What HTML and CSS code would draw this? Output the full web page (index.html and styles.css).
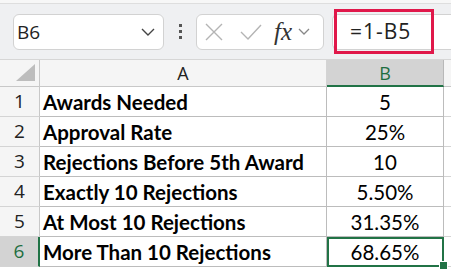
FILE: index.html
```html
<!DOCTYPE html>
<html lang="en">
<head>
    <meta charset="UTF-8">
    <title>Rejections</title>
    <link rel="stylesheet" href="styles.css">
</head>
<body>
    <div class="edge"></div>
    <div class="toolbar">
        <div class="name-box">
            <span>B6</span>
            <svg class="chev" width="14" height="8" viewBox="0 0 14 8"><path d="M1 1 L7 7 L13 1" fill="none" stroke="#444" stroke-width="1.4"/></svg>
        </div>
        <div class="dots"><i></i><i></i><i></i></div>
        <div class="fx-box">
            <svg width="20" height="20" viewBox="0 0 20 20"><path d="M2 2 L18 18 M18 2 L2 18" stroke="#b4b4b4" stroke-width="1.4"/></svg>
            <svg width="22" height="18" viewBox="0 0 22 18"><path d="M1 9 L8 16 L21 2" fill="none" stroke="#b4b4b4" stroke-width="1.4"/></svg>
            <span class="fx">fx</span>
            <svg class="chev" width="12" height="8" viewBox="0 0 12 8"><path d="M1 1 L6 6 L11 1" fill="none" stroke="#888" stroke-width="1.3"/></svg>
        </div>
        <div class="formula">
            <span class="formula-text">=1-B5</span>
        </div>
    </div>

    <div class="sheet">
        <div class="corner"><span class="tri"></span></div>
        <div class="col-head">A</div>
        <div class="col-head sel">B</div>
        <div class="col-head last"></div>

        <div class="row-head">1</div>
        <div class="cell label">Awards Needed</div>
        <div class="cell num">5</div>
        <div class="cell last"></div>

        <div class="row-head">2</div>
        <div class="cell label">Approval Rate</div>
        <div class="cell num">25%</div>
        <div class="cell last"></div>

        <div class="row-head">3</div>
        <div class="cell label">Rejections Before 5th Award</div>
        <div class="cell num">10</div>
        <div class="cell last"></div>

        <div class="row-head">4</div>
        <div class="cell label">Exactly 10 Rejections</div>
        <div class="cell num">5.50%</div>
        <div class="cell last"></div>

        <div class="row-head">5</div>
        <div class="cell label">At Most 10 Rejections</div>
        <div class="cell num">31.35%</div>
        <div class="cell last"></div>

        <div class="row-head sel">6</div>
        <div class="cell label">More Than 10 Rejections</div>
        <div class="cell num active">68.65%<span class="handle"></span></div>
        <div class="cell last"></div>
    </div>
</body>
</html>
```

FILE: styles.css
```css
body {
    margin: 0;
    width: 451px;
    height: 270px;
    overflow: hidden;
    background: #ffffff;
    font-family: "Segoe UI", "Open Sans", "Noto Sans", sans-serif;
}
.edge {
    height: 3px;
    background: #f7f7f7;
    border-bottom: 1px solid #dedede;
}
.toolbar {
    height: 56px;
    background: #eff0f2;
    display: flex;
    align-items: center;
    padding-left: 13px;
    box-sizing: border-box;
    border-bottom: 1px solid #d6d6d6;
}
.name-box {
    width: 151px;
    height: 36px;
    box-sizing: border-box;
    background: white;
    border: 1px solid #d2d2d2;
    border-radius: 6px;
    display: flex;
    align-items: center;
    justify-content: space-between;
    padding: 0 8px 0 3px;
    font-size: 19px;
    color: #222;
}
.dots {
    width: 32px;
    display: flex;
    flex-direction: column;
    align-items: center;
    gap: 3px;
}
.dots i {
    width: 3px;
    height: 3px;
    background: #555;
    display: block;
}
.fx-box {
    width: 128px;
    height: 36px;
    box-sizing: border-box;
    background: white;
    border: 1px solid #d2d2d2;
    border-radius: 6px;
    display: flex;
    align-items: center;
    padding-left: 7px;
    gap: 16px;
}
.fx-box .fx {
    font-family: "Liberation Serif", serif;
    font-style: italic;
    font-size: 25px;
    color: #333;
    margin-left: -4px;
}
.fx-box .chev {
    margin-left: -10px;
}
.formula {
    margin-left: 8px;
    flex: 1;
    height: 36px;
    box-sizing: border-box;
    background: white;
    border: 1px solid #d2d2d2;
    border-right: none;
    border-radius: 6px 0 0 6px;
    position: relative;
}
.formula-text {
    position: absolute;
    left: 1px;
    top: -6px;
    width: 81px;
    height: 39px;
    border: 3px solid #e0184a;
    box-sizing: content-box;
    padding-left: 13px;
    font-size: 21px;
    line-height: 39px;
    color: #222;
    letter-spacing: 1px;
}
.sheet {
    display: grid;
    grid-template-columns: 40px 287px 117px 7px;
    grid-template-rows: 27px repeat(6, 30px);
}
.corner {
    background: #f5f5f5;
    border-right: 1px solid #c8c8c8;
    border-bottom: 1px solid #c8c8c8;
    position: relative;
}
.tri {
    position: absolute;
    left: 16px;
    bottom: 5px;
    width: 0;
    height: 0;
    border-left: 19px solid transparent;
    border-bottom: 17px solid #bdbdbd;
}
.col-head {
    background: #f5f5f5;
    border-right: 1px solid #d4d4d4;
    border-bottom: 1px solid #c8c8c8;
    text-align: center;
    font-size: 18px;
    line-height: 27px;
    color: #222;
}
.col-head.sel {
    background: #d3d3d3;
    color: #1e6e3f;
    border-bottom: 2px solid #217346;
    border-right: 1px solid #b8b8b8;
}
.col-head.last {
    border-right: none;
}
.row-head {
    background: #f5f5f5;
    border-right: 1px solid #c8c8c8;
    border-bottom: 1px solid #d4d4d4;
    text-align: center;
    font-size: 19px;
    line-height: 29px;
    color: #222;
}
.row-head.sel {
    background: #d3d3d3;
    color: #1e6e3f;
    border-right: 2px solid #217346;
}
.cell {
    border-right: 1px solid #bcbcbc;
    border-bottom: 1px solid #bcbcbc;
    font-family: "Lato", "Open Sans", sans-serif;
    font-size: 20.5px;
    line-height: 30px;
    color: #000;
    white-space: nowrap;
    overflow: hidden;
}
.cell.label {
    font-weight: bold;
    padding-left: 3px;
}
.cell.num {
    text-align: center;
    position: relative;
    overflow: visible;
}
.cell.last {
    border-right: none;
    border-bottom: 1px solid #d4d4d4;
}
.cell.active {
    outline: 2px solid #217346;
    outline-offset: -2px;
    box-shadow: inset 0 0 0 1px #fff;
}
.handle {
    position: absolute;
    right: -5px;
    bottom: -4px;
    width: 7px;
    height: 7px;
    background: #217346;
    border: 1px solid white;
}
```
